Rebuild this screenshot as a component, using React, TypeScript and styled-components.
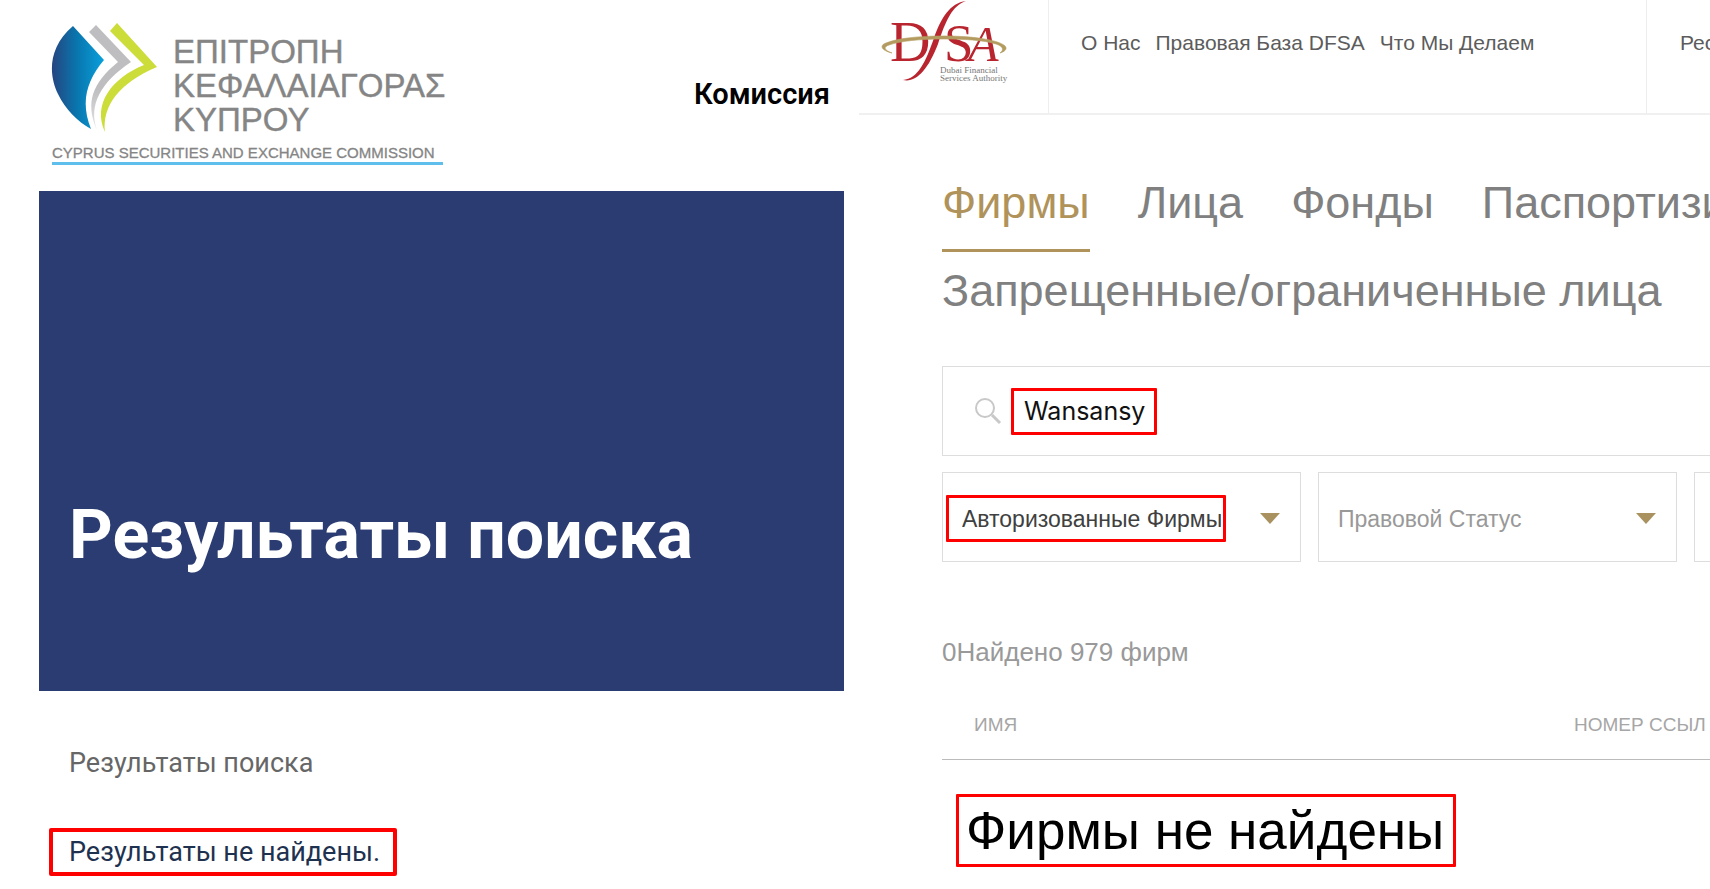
import React from "react";
import styled, { createGlobalStyle } from "styled-components";

const Global = createGlobalStyle`
  *, *::before, *::after { box-sizing: border-box; }
  html { overflow-x: hidden; }
  body { margin: 0; background: #fff; font-family: "Liberation Sans", Arial, sans-serif; }
  h1, p { margin: 0; }
`;

const Page = styled.div`
  display: grid;
  grid-template-columns: minmax(0, 1fr) minmax(0, 1fr);
  overflow: hidden;
`;

/* Cyprus commission panel */
const Panel = styled.section`
  padding: 0 11px 0 39px;
  font-family: Roboto, sans-serif;
`;

const PanelHeader = styled.header`
  display: flex;
  justify-content: space-between;
  align-items: flex-start;
  height: 191px;
  padding: 20px 14px 0 12px;
`;

const Brand = styled.a`
  display: block;
  color: #808080;
  text-decoration: none;
`;

const Logo = styled.svg`
  display: block;
`;

const PanelLink = styled.a`
  margin-top: 56px;
  font-size: 29px;
  line-height: 36px;
  font-weight: 600;
  color: #000;
  text-decoration: none;
`;

const Hero = styled.div`
  display: flex;
  align-items: flex-end;
  height: 500px;
  padding: 0 30px 116px;
  background: #2a3c71;
`;

const HeroTitle = styled.h1`
  font-size: 68px;
  line-height: 80px;
  font-weight: 700;
  color: #fff;
  white-space: nowrap;
`;

const Results = styled.div`
  display: flex;
  flex-direction: column;
  align-items: flex-start;
  gap: 41px;
  padding: 48px 10px 13px;
`;

const ResultsLabel = styled.p`
  padding-left: 20px;
  font-size: 27px;
  line-height: 48px;
  color: #666;
`;

const Marked = styled.p`
  padding: 0 13px 0 16px;
  border: 4px solid #f00;
  border-radius: 2px;
  font-size: 27px;
  line-height: 40px;
  color: #1e3250;
`;

/* Dubai authority panel */
const Register = styled.section`
  padding-left: 4px;
`;

const RegisterHeader = styled.header`
  display: grid;
  grid-template-columns: 189px minmax(0, 1fr) 63px;
  height: 115px;
  border-bottom: 2px solid #f0f0f0;
`;

const LogoCell = styled.a`
  padding-left: 22px;
`;

const Nav = styled.nav`
  display: flex;
  gap: 15px;
  padding: 30px 0 0 32px;
  border-left: 1px solid #eee;
  border-right: 1px solid #eee;
`;

const NavLink = styled.a`
  font-size: 21px;
  line-height: 26px;
  color: #5c5c5c;
  text-decoration: none;
  white-space: nowrap;
`;

const SideNav = styled.nav`
  padding: 30px 0 0 33px;
  overflow: hidden;
`;

const Body = styled.div`
  padding-left: 83px;
`;

const Tabs = styled.div`
  display: grid;
  grid-template-columns: repeat(4, max-content);
  column-gap: 48px;
  row-gap: 8px;
  padding-top: 57px;
`;

const Tab = styled.button<{ $active?: boolean; $wide?: boolean }>`
  grid-column: ${(p) => (p.$wide ? "1 / -1" : "auto")};
  justify-self: start;
  height: 80px;
  padding: 0 0 15px;
  border: 0;
  border-bottom: 3px solid ${(p) => (p.$active ? "#b0935a" : "transparent")};
  background: none;
  font: 45px/62px "Liberation Sans", Arial, sans-serif;
  color: ${(p) => (p.$active ? "#b0935a" : "#808080")};
  white-space: nowrap;
`;

const SearchBox = styled.label`
  display: flex;
  align-items: center;
  gap: 9px;
  height: 90px;
  margin-top: 26px;
  padding-left: 31px;
  border: 1px solid #ddd;
  border-right: 0;
`;

const SearchInput = styled.input`
  width: 146px;
  height: 47px;
  padding: 0 0 0 10px;
  border: 3px solid #f00;
  border-radius: 1px;
  background: none;
  font: 25px/30px Inter, sans-serif;
  color: #111;
`;

const Filters = styled.div`
  display: grid;
  grid-template-columns: 359px 359px 359px;
  gap: 17px;
  margin-top: 16px;
`;

const Filter = styled.div`
  position: relative;
  display: flex;
  align-items: center;
  height: 90px;
  padding: 3px 0 0 3px;
  border: 1px solid #ddd;
`;

const Select = styled.select<{ $marked?: boolean }>`
  appearance: none;
  width: ${(p) => (p.$marked ? "280px" : "320px")};
  height: 47px;
  padding: 0 0 0 13px;
  border: 3px solid ${(p) => (p.$marked ? "#f00" : "transparent")};
  border-radius: 1px;
  background: none;
  font: 23px/30px "Liberation Sans", Arial, sans-serif;
  color: ${(p) => (p.$marked ? "#404040" : "#999")};
`;

const Arrow = styled.svg`
  position: absolute;
  right: 20px;
  top: 40px;
  pointer-events: none;
`;

const Count = styled.p`
  margin-top: 73px;
  font-size: 26px;
  line-height: 34px;
  color: #999;
`;

const Table = styled.table`
  width: 100%;
  margin-top: 38px;
  border-collapse: collapse;
  table-layout: fixed;
`;

const Th = styled.th<{ $ref?: boolean }>`
  width: ${(p) => (p.$ref ? "136px" : "auto")};
  padding: 6px 0 22px ${(p) => (p.$ref ? "0" : "32px")};
  border-bottom: 1px solid #bbb;
  font-size: 19px;
  line-height: 24px;
  font-weight: 400;
  text-align: left;
  color: #a6a6a6;
  white-space: nowrap;
`;

const EmptyCell = styled.td`
  padding: 34px 0 0 14px;
`;

const Empty = styled.span`
  display: inline-block;
  padding: 0 9px 0 7px;
  border: 3px solid #f00;
  border-radius: 1px;
  font-size: 53px;
  line-height: 67px;
  color: #000;
`;

function CommissionLogo() {
  return (
    <Logo width="396" height="150" viewBox="51 20 396 150" role="img" aria-label="Cyprus Securities and Exchange Commission">
      <defs>
        <linearGradient id="leaf" x1="0" y1="0" x2="1" y2="0">
          <stop offset="0" stopColor="#254580" />
          <stop offset="0.5" stopColor="#0878b0" />
          <stop offset="1" stopColor="#0aa0dc" />
        </linearGradient>
        <linearGradient id="fold" x1="0" y1="0" x2="0" y2="1">
          <stop offset="0.6" stopColor="#bebec0" />
          <stop offset="1" stopColor="#e2e2e4" />
        </linearGradient>
      </defs>
      <path d="M73 26C47 48 49 76 58 94C65 109 78 122 91 129C80 102 87 80 104 60Z" fill="url(#leaf)" />
      <path d="M96 25L89 32L118 62C92 83 85 103 97 130C88 105 101 82 131 62Z" fill="url(#fold)" />
      <path d="M117 23L110 31L144 65C112 78 92 104 105 132C102 106 119 83 157 67Z" fill="#ccdc38" />
      <g fill="#858585" fontFamily="Liberation Sans, Arial, sans-serif">
        <g fontSize="33" stroke="#858585" strokeWidth="0.4">
          <text x="173" y="63">ΕΠΙΤΡΟΠΗ</text>
          <text x="173" y="97">ΚΕΦΑΛΑΙΑΓΟΡΑΣ</text>
          <text x="173" y="131">ΚΥΠΡΟΥ</text>
        </g>
        <text x="52" y="158" fontSize="15" stroke="#858585" strokeWidth="0.3">CYPRUS SECURITIES AND EXCHANGE COMMISSION</text>
      </g>
      <rect x="52" y="162" width="391" height="3" fill="#5fbfec" />
    </Logo>
  );
}

function AuthorityLogo() {
  return (
    <Logo width="130" height="86" viewBox="881 0 130 86" role="img" aria-label="Dubai Financial Services Authority">
      <g fill="#b9252f" fontFamily="Liberation Serif, Times New Roman, serif">
        <text x="890" y="61" fontSize="56">D</text>
        <text x="944" y="61" fontSize="53">S</text>
        <text x="968" y="61" fontSize="50" fontStyle="italic">A</text>
      </g>
      <path d="M966 1C950 3 941 18 934 38C926 61 918 79 903 80C916 83 928 70 938 44C946 20 952 6 966 1Z" fill="#b9252f" />
      <path
        d="M892 53C880 50 880 45 886 43C898 38 920 36 944 36C978 36 1000 41 1005 46C1008 49 1004 52 1000 53C1005 49 1002 46 996 44C984 40 962 39 944 39C920 39 900 41 889 45C883 47 884 50 892 53Z"
        fill="#b39a5e"
        stroke="#b39a5e"
        strokeWidth="0.6"
      />
      <g fill="#777" fontFamily="Liberation Serif, Times New Roman, serif" fontSize="9">
        <text x="940" y="73">Dubai Financial</text>
        <text x="940" y="81">Services Authority</text>
      </g>
    </Logo>
  );
}

function DownArrow() {
  return (
    <Arrow width="20" height="11" viewBox="0 0 20 11" aria-hidden="true">
      <path d="M0 0H20L10 11Z" fill="#a99260" />
    </Arrow>
  );
}

export default function App() {
  return (
    <>
      <Global />
      <Page>
        <Panel>
          <PanelHeader>
            <Brand href="#"><CommissionLogo /></Brand>
            <PanelLink href="#">Комиссия</PanelLink>
          </PanelHeader>
          <Hero><HeroTitle>Результаты поиска</HeroTitle></Hero>
          <Results>
            <ResultsLabel>Результаты поиска</ResultsLabel>
            <Marked>Результаты не найдены.</Marked>
          </Results>
        </Panel>
        <Register>
          <RegisterHeader>
            <LogoCell href="#"><AuthorityLogo /></LogoCell>
            <Nav>
              <NavLink href="#">О Нас</NavLink>
              <NavLink href="#">Правовая База DFSA</NavLink>
              <NavLink href="#">Что Мы Делаем</NavLink>
            </Nav>
            <SideNav><NavLink href="#">Рес</NavLink></SideNav>
          </RegisterHeader>
          <Body>
            <Tabs>
              <Tab $active>Фирмы</Tab>
              <Tab>Лица</Tab>
              <Tab>Фонды</Tab>
              <Tab>Паспортизи</Tab>
              <Tab $wide>Запрещенные/ограниченные лица</Tab>
            </Tabs>
            <SearchBox>
              <svg width="28" height="28" viewBox="0 0 28 28" fill="none" stroke="#c8c8c8" aria-hidden="true">
                <circle cx="11" cy="11" r="9" strokeWidth="2" />
                <path d="M18 18L26 26" strokeWidth="3" />
              </svg>
              <SearchInput type="text" defaultValue="Wansansy" aria-label="Поиск" />
            </SearchBox>
            <Filters>
              <Filter>
                <Select $marked aria-label="Фирмы"><option>Авторизованные Фирмы</option></Select>
                <DownArrow />
              </Filter>
              <Filter>
                <Select aria-label="Правовой Статус"><option>Правовой Статус</option></Select>
                <DownArrow />
              </Filter>
              <Filter />
            </Filters>
            <Count>0Найдено 979 фирм</Count>
            <Table>
              <thead>
                <tr><Th>ИМЯ</Th><Th $ref>НОМЕР ССЫЛ</Th></tr>
              </thead>
              <tbody>
                <tr><EmptyCell colSpan={2}><Empty>Фирмы не найдены</Empty></EmptyCell></tr>
              </tbody>
            </Table>
          </Body>
        </Register>
      </Page>
    </>
  );
}
